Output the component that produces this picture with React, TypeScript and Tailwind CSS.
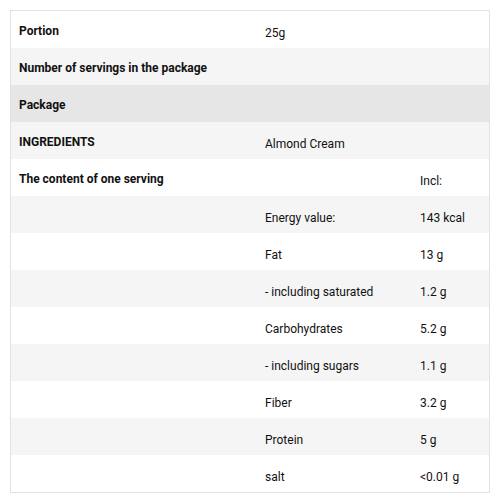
type Row = { a?: string; b?: string; c?: string; bg: string };

const rows: Row[] = [
  { a: 'Portion', b: '25g', bg: 'bg-white' },
  { a: 'Number of servings in the package', bg: 'bg-[#f5f5f5]' },
  { a: 'Package', bg: 'bg-[#e6e6e6]' },
  { a: 'INGREDIENTS', b: 'Almond Cream', bg: 'bg-[#f5f5f5]' },
  { a: 'The content of one serving', c: 'Incl:', bg: 'bg-white' },
  { b: 'Energy value:', c: '143 kcal', bg: 'bg-[#f5f5f5]' },
  { b: 'Fat', c: '13 g', bg: 'bg-white' },
  { b: '- including saturated', c: '1.2 g', bg: 'bg-[#f5f5f5]' },
  { b: 'Carbohydrates', c: '5.2 g', bg: 'bg-white' },
  { b: '- including sugars', c: '1.1 g', bg: 'bg-[#f5f5f5]' },
  { b: 'Fiber', c: '3.2 g', bg: 'bg-white' },
  { b: 'Protein', c: '5 g', bg: 'bg-[#f5f5f5]' },
  { b: 'salt', c: '<0.01 g', bg: 'bg-white' },
];

export default function App() {
  return (
    <div className="min-h-screen bg-white p-[10px] font-['Roboto',sans-serif] text-[#111]">
      <div className="w-[480px] border border-[#e2e2e2]">
        {rows.map((r, i) => (
          <div key={i} className={`grid h-[37px] grid-cols-[246px_155px_1fr] ${r.bg}`}>
            <div className="pl-[8px] pt-[12px] text-[12px] font-bold leading-[16px]">{r.a}</div>
            <div className="pl-[8px] pt-[14px] text-[12px] leading-[16px]">{r.b}</div>
            <div className="pl-[8px] pt-[14px] text-[12px] leading-[16px]">{r.c}</div>
          </div>
        ))}
      </div>
    </div>
  );
}
